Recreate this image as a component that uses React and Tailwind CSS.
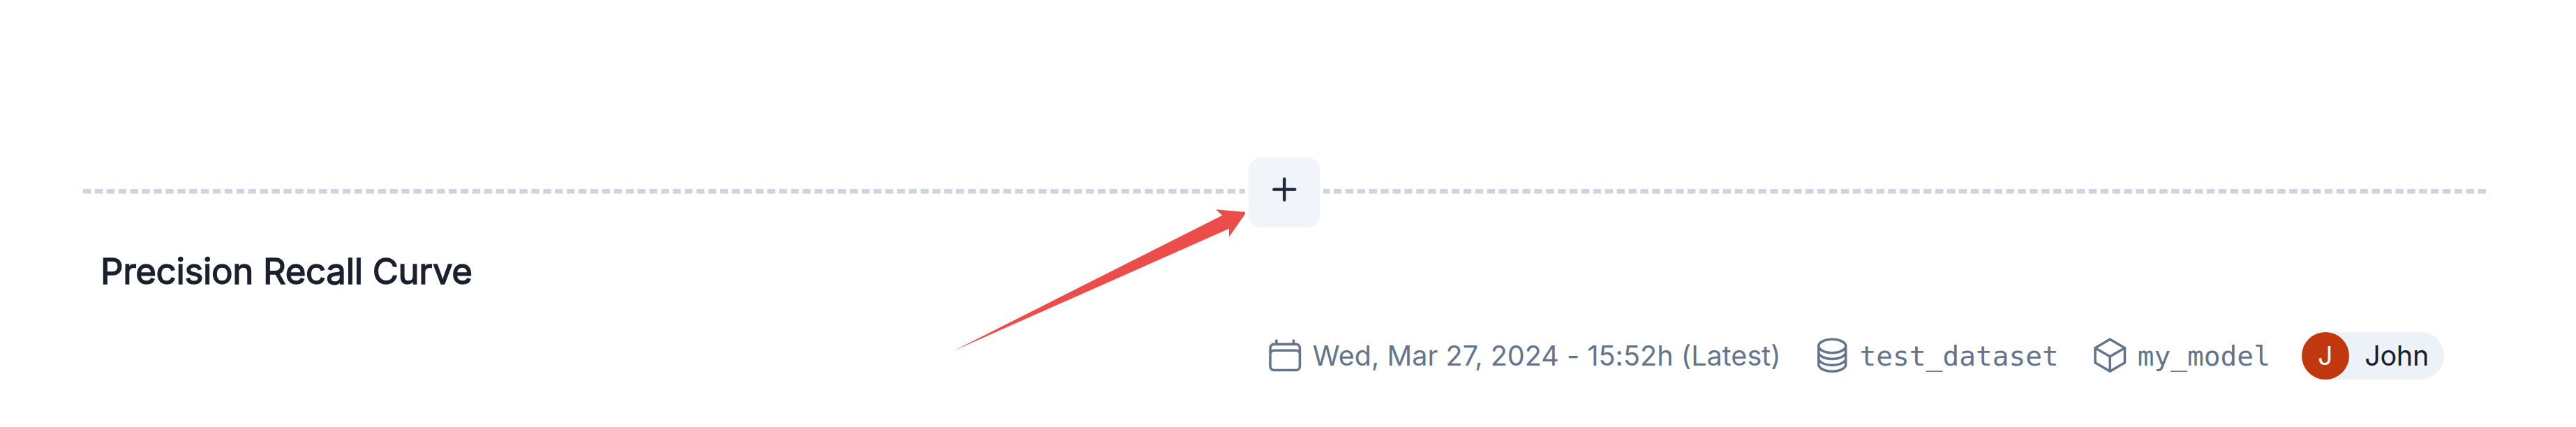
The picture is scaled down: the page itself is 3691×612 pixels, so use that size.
import React from "react";
import { HiOutlineCalendar, HiOutlineCircleStack, HiOutlineCube } from "react-icons/hi2";

function Divider() {
  return (
    <div className="grid h-[100px] items-center">
      <svg className="col-start-1 row-start-1 ml-[118.6px] -translate-y-[1.7px]" width="3443" height="8" viewBox="0 0 3443 8">
        <line x1="0" y1="4" x2="3443" y2="4" stroke="#cbd5e1" strokeWidth="6.4" strokeDasharray="11.3 5.605" />
      </svg>
      <div className="z-10 col-start-1 row-start-1 flex justify-center">
        <div className="-ml-[11px] bg-white px-[5.6px]">
          <button aria-label="Add section" className="flex h-[100px] w-[101.6px] justify-center rounded-[17px] bg-[#f1f5f9] pt-[28px]">
            <svg width="35" height="35" viewBox="0 0 35 35" fill="none" stroke="#1e293b" strokeWidth="4.5" strokeLinecap="round">
              <path d="M17.3 2.5v30M2.4 17.4h29.8" />
            </svg>
          </button>
        </div>
      </div>
    </div>
  );
}

export default function App() {
  return (
    <main className="relative h-[612px] w-[3691px] overflow-hidden bg-white pt-[226px] font-['Inter',sans-serif]">
      <Divider />
      <h2 className="ml-[144px] mt-[30px] h-[66px] whitespace-nowrap text-[51px] font-normal leading-[66px] tracking-[-0.35px] text-[#1a202c] [-webkit-text-stroke:1.4px_#1a202c]">
        Precision Recall Curve
      </h2>
      <div className="mr-[188.7px] mt-[53.5px] flex h-[68px] items-center justify-end whitespace-nowrap text-[39.5px] leading-[56px] text-[#64748b]">
        <div className="flex items-center gap-[11.3px]">
          <HiOutlineCalendar className="size-[56.5px]" />
          <span className="tracking-[0.04px]">Wed, Mar 27, 2024 - 15:52h (Latest)</span>
        </div>
        <div className="ml-[45px] flex items-center gap-[11.3px]">
          <HiOutlineCircleStack className="size-[56.5px]" />
          <span className="font-['DejaVu_Sans_Mono',monospace]">test_dataset</span>
        </div>
        <div className="ml-[45px] flex items-center gap-[11.3px]">
          <HiOutlineCube className="size-[56.5px]" />
          <span className="font-['DejaVu_Sans_Mono',monospace]">my_model</span>
        </div>
        <div className="ml-[45px] flex h-[68px] w-[204.4px] items-center rounded-full bg-[#edf2f9] text-[#1a202c]">
          <span className="flex size-[68px] items-center justify-center rounded-full bg-[#c1380e] text-[37px] text-white">J</span>
          <span className="ml-[22.3px] tracking-[-0.3px]">John</span>
        </div>
      </div>
      <svg className="absolute inset-0" width="3691" height="612" viewBox="0 0 3691 612" aria-hidden="true">
        <path d="M1366 503L1751.2 308.7L1742.2 300.2L1786 304L1760.8 340L1761 327.7Z" fill="#eb4d4b" />
      </svg>
    </main>
  );
}
